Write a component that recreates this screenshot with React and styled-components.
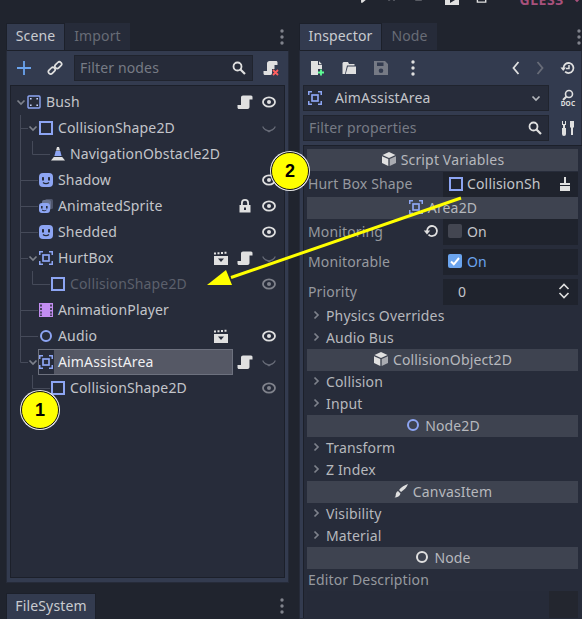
import React from "react";
import styled, { createGlobalStyle } from "styled-components";

const GlobalStyle = createGlobalStyle`
	html, body {
		margin: 0;
		padding: 0;
		background: #20242e;
	}
	* {
		box-sizing: border-box;
	}
`;

const Screen = styled.div`
	position: relative;
	width: 582px;
	height: 619px;
	overflow: hidden;
	background: #20242e;
	font-family: "Noto Sans", sans-serif;
	font-size: 14px;
	letter-spacing: 0.15px;
	color: #c3c5ca;
`;

const TopBar = styled.div`
	height: 23px;
	overflow: hidden;
`;

const Transport = styled.div`
	display: flex;
	align-items: center;
	gap: 16px;
	height: 16px;
	margin-top: -10px;
	padding-left: 359px;
`;

const MovieSlot = styled.span`
	margin-left: 4px;
`;

const RendererName = styled.span`
	margin-left: 16px;
	margin-top: 3px;
	font-weight: 700;
	font-size: 14px;
	line-height: 16px;
	letter-spacing: 0.6px;
	color: #a8517c;
`;

const RendererCaret = styled.span`
	margin-left: -8px;
	margin-top: 2px;
`;

const Docks = styled.div`
	display: flex;
	gap: 10px;
	padding-left: 6px;
`;

const Dock = styled.div`
	display: flex;
	flex-direction: column;
	flex: 0 0 283px;
	min-width: 0;
	height: 596px;
`;

const TabBar = styled.div`
	display: flex;
	align-items: stretch;
	height: 27px;
	flex: none;
`;

const Tab = styled.div`
	display: flex;
	align-items: center;
	justify-content: center;
	width: ${(props) => props.$width}px;
	padding-bottom: 3px;
	background: ${(props) => (props.$active ? "#333b4f" : "#262b39")};
	color: ${(props) => (props.$active ? "#c9cbd0" : "#686c76")};
	border: 1px solid ${(props) => (props.$active ? "#1c202a" : "transparent")};
	border-bottom: none;
`;

const TabMenu = styled.div`
	margin-left: auto;
	width: 16px;
	display: flex;
	align-items: center;
	justify-content: center;
	margin-right: ${(props) => props.$overhang || 0}px;
`;

const Panel = styled.div`
	display: flex;
	flex-direction: column;
	height: ${(props) => props.$height}px;
	background: #333b4f;
	border: 1px solid #262b39;
	border-top-color: #1c202a;
`;

const SceneToolbar = styled.div`
	display: flex;
	align-items: center;
	height: 34px;
	flex: none;
	padding: 0 0 0 5px;
`;

const ToolSlot = styled.div`
	flex: none;
	width: ${(props) => props.$width || 32}px;
	display: flex;
	align-items: center;
	justify-content: center;
`;

const FilterBox = styled.div`
	display: flex;
	align-items: center;
	justify-content: space-between;
	width: ${(props) => props.$width}px;
	height: 26px;
	padding: 0 5px 0 5px;
	background: #262b39;
	border: 1px solid #20242e;
	color: #777b85;
	flex: none;
`;

const FilterText = styled.span`
	margin-bottom: 2px;
`;

const Tree = styled.div`
	position: relative;
	flex: none;
	width: 275px;
	height: 493px;
	margin-left: 3px;
	padding-top: 3px;
	background: #272c3a;
	border: 1px solid #1c202a;
`;

const Guides = styled.svg`
	position: absolute;
	top: 0;
	left: 0;
`;

const NodeRow = styled.div`
	position: relative;
	display: flex;
	align-items: center;
	height: 26px;
	padding-left: ${(props) => 4 + props.$depth * 12}px;
	padding-right: 3px;
`;

const Fold = styled.div`
	flex: none;
	width: 11px;
	display: flex;
	justify-content: center;
`;

const NameCell = styled.div`
	flex: 1;
	min-width: 0;
	display: flex;
	align-items: center;
	height: 26px;
	box-shadow: ${(props) => (props.$selected ? "inset 0 0 0 1px #6d717e" : "none")};
`;

const NodeName = styled.div`
	flex: 1;
	align-self: stretch;
	display: flex;
	align-items: center;
	padding-left: 4px;
	padding-bottom: 2px;
	margin: ${(props) => (props.$selected ? "1px 1px 1px 0" : "0")};
	background: ${(props) => (props.$selected ? "#555865" : "transparent")};
	color: ${(props) => (props.$selected ? "#f0f0f2" : props.$dim ? "#5c606c" : "#c3c5ca")};
`;

const ActionSlot = styled.div`
	flex: none;
	width: 24px;
	display: flex;
	align-items: center;
	justify-content: center;
`;

const BottomTabs = styled.div`
	display: flex;
	height: 26px;
	flex: none;
	margin-top: 10px;
`;

const InspectorToolbar = styled.div`
	display: flex;
	align-items: center;
	height: 34px;
	flex: none;
	padding-left: 1px;
`;

const InspectorField = styled.div`
	display: flex;
	align-items: center;
	height: 26px;
	flex: none;
	padding-left: 3px;
	margin-bottom: ${(props) => props.$gap}px;
`;

const ObjectPicker = styled.div`
	display: flex;
	align-items: center;
	flex: none;
	width: 246px;
	height: 26px;
	padding: 0 7px 0 3px;
	background: #272c3a;
	border: 1px solid #20242e;
`;

const ObjectName = styled.span`
	flex: 1;
	margin-left: 12px;
	margin-bottom: 2px;
	color: #c3c5ca;
`;

const SideButton = styled.div`
	flex: none;
	width: 38px;
	display: flex;
	justify-content: center;
`;

const Properties = styled.div`
	flex: 1;
	flex-shrink: 0;
	margin-left: 3px;
	padding: 3px 0 0 3px;
	background: #272c3a;
	border: 1px solid #1c202a;
	border-right: none;
	border-bottom: none;
	overflow: hidden;
	width: 280px;
`;

const CategoryHeader = styled.div`
	display: flex;
	align-items: center;
	justify-content: center;
	gap: 4px;
	width: 271px;
	height: 22px;
	padding-bottom: 2px;
	background: #3e4350;
	color: #b6b8bd;
`;

const SectionRow = styled.div`
	display: flex;
	align-items: center;
	width: 271px;
	height: 22px;
	padding-left: 4px;
	padding-bottom: 2px;
	gap: 5px;
	color: #b6b8bd;
`;

const PropRow = styled.div`
	display: flex;
	align-items: stretch;
	width: 271px;
	height: ${(props) => props.$height || 26}px;
	margin-top: ${(props) => props.$top || 0}px;
`;

const PropLabel = styled.div`
	flex: 1;
	display: flex;
	align-items: center;
	justify-content: space-between;
	padding: 0 4px 2px 1px;
	color: #96999f;
`;

const PropValue = styled.div`
	flex: 0 0 135px;
	display: flex;
	align-items: center;
	gap: 5px;
	padding: 0 5px 2px;
	background: #1f232d;
	color: ${(props) => (props.$on ? "#6ba4ee" : "#c3c5ca")};
`;

const Grow = styled.span`
	flex: 1;
`;

const ShapeName = styled.span`
	flex: 1;
	margin-left: -2px;
`;

const CheckBox = styled.div`
	flex: none;
	display: flex;
	align-items: center;
	justify-content: center;
	width: 14px;
	height: 14px;
	border-radius: 2px;
	background: ${(props) => (props.$checked ? "#6ba4ee" : "#434651")};
`;

const NumberText = styled.span`
	flex: 1;
	padding-left: 10px;
`;

const SpinnerSlot = styled.span`
	margin-right: 3px;
`;

const DescriptionLabel = styled.div`
	display: flex;
	align-items: center;
	height: 22px;
	padding: 0 0 2px 1px;
	color: #96999f;
`;

const DescriptionBox = styled.div`
	display: flex;
	width: 271px;
	height: 40px;
	background: #23262f;
`;

const DescriptionText = styled.div`
	width: 242px;
	background: #262b39;
`;

const Arrow = styled.svg`
	position: absolute;
	top: 0;
	left: 0;
`;

const Badge = styled.div`
	position: absolute;
	left: ${(props) => props.$x - 19}px;
	top: ${(props) => props.$y - 19}px;
	width: 38px;
	height: 38px;
	display: flex;
	align-items: center;
	justify-content: center;
	border-radius: 50%;
	background: #ffff00;
	border: 1px solid #111;
	box-shadow: 0 0 0 1px #e8e8e8;
	color: #000;
	font-family: "Liberation Sans", sans-serif;
	font-weight: 700;
	font-size: 18px;
`;

const Svg = ({ size = 16, children }) => (
	<svg width={size} height={size} viewBox="0 0 16 16" style={{ display: "block" }}>
		{children}
	</svg>
);

const BLUE = "#8da5f3";
const WHITE = "#e0e0e0";

const BushIcon = () => (
	<Svg>
		<rect x="2" y="2" width="12" height="12" rx="1" fill="none" stroke={BLUE} strokeWidth="1.4" />
		<path d="M4 4h1.6v1.6H4zM10.4 4H12v1.6h-1.6zM4 10.4h1.6V12H4zM10.4 10.4H12V12h-1.6z" fill="#c8d4fa" />
	</Svg>
);

const ShapeIcon = () => (
	<Svg>
		<rect x="2" y="2" width="12" height="12" fill="none" stroke={BLUE} strokeWidth="2" />
	</Svg>
);

const ConeIcon = () => (
	<Svg>
		<path d="M7 1h2l1 3.500H6z" fill={WHITE} />
		<path d="M5.700 5h4.600l1.300 5H4.400z" fill={BLUE} />
		<path d="M3.800 11h8.400l2.800 3.500H1z" fill={WHITE} />
	</Svg>
);

const FaceIcon = () => (
	<Svg>
		<rect x="1" y="1" width="14" height="14" rx="4" fill={BLUE} />
		<rect x="4" y="5" width="2" height="3.500" rx="0.6" fill="#272c3a" />
		<rect x="10" y="5" width="2" height="3.500" rx="0.6" fill="#272c3a" />
		<path d="M5 10.500c1.600 1.600 4.400 1.600 6 0" fill="none" stroke="#272c3a" strokeWidth="1.200" />
	</Svg>
);

const AnimatedIcon = () => (
	<Svg>
		<rect x="7" y="1" width="8" height="10" rx="1.500" fill="#4e556b" />
		<rect x="4" y="2" width="9" height="10" rx="2" fill="#697391" />
		<rect x="1" y="5" width="11" height="10" rx="3" fill={BLUE} />
		<rect x="3" y="8" width="1.600" height="2.500" fill="#272c3a" />
		<rect x="8" y="8" width="1.600" height="2.500" fill="#272c3a" />
		<path d="M4 12c1.200 1 3.200 1 4.400 0" fill="none" stroke="#272c3a" />
	</Svg>
);

const AreaIcon = () => (
	<Svg>
		<path d="M1 5V1h4v1.500H2.500V5zM11 1h4v4h-1.500V2.500H11zM1 11h1.500v2.500H5V15H1zM15 11v4h-4v-1.500h2.500V11z" fill={BLUE} />
		<rect x="5" y="5" width="6" height="6" fill="none" stroke={BLUE} strokeWidth="1.700" />
	</Svg>
);

const FilmIcon = () => (
	<Svg>
		<path
			fillRule="evenodd"
			d="M1 1h14v14H1zM2.200 2.500v2h1.600v-2zM12.200 2.500v2h1.600v-2zM2.200 6v2h1.600V6zM12.200 6v2h1.600V6zM2.200 9.500v2h1.600v-2zM12.200 9.500v2h1.600v-2zM2.200 12.500v1.500h1.600v-1.500zM12.200 12.500v1.500h1.600v-1.500z"
			fill="#c38ef1"
		/>
	</Svg>
);

const RingIcon = ({ color = BLUE, size = 16 }) => (
	<Svg size={size}>
		<circle cx="8" cy="8" r="5" fill="none" stroke={color} strokeWidth="2" />
	</Svg>
);

const ScriptIcon = () => (
	<Svg>
		<path d="M6 1.500h8c1 0 1.500.8 1.500 1.800V5.500h-3V13c0 1-.8 2-2 2H2c-1 0-1.500-.8-1.500-1.800V11H4V3.500c0-1.300.8-2 2-2z" fill={WHITE} />
	</Svg>
);

const ClapperIcon = () => (
	<Svg>
		<path d="M1 2.500h2v2H1zM4.500 2.200h2v2h-2zM8 2h2v2H8zM11.500 1.700h2v2h-2z" fill={WHITE} />
		<path fillRule="evenodd" d="M1 6h14v9H1zM5 8.500l3 3.500 3-3.500z" fill={WHITE} />
	</Svg>
);

const EyeIcon = ({ color = WHITE }) => (
	<Svg>
		<ellipse cx="8" cy="8" rx="6" ry="4.700" fill="none" stroke={color} strokeWidth="1.800" />
		<circle cx="8" cy="8" r="2" fill={color} />
	</Svg>
);

const HiddenEyeIcon = () => (
	<Svg>
		<path d="M2 6c2.500 5.500 9.500 5.500 12 0l.7 1c-1 2-2.500 3.500-4.500 4L8 12.500 5.800 11C3.800 10.500 2.300 9 1.300 7z" fill="#686c78" />
	</Svg>
);

const LockIcon = () => (
	<Svg>
		<path fillRule="evenodd" d="M2.500 7V14.500h11V7h-1.500V5a4 4 0 0 0-8 0v2zM5.800 7V5a2.200 2.200 0 0 1 4.400 0v2zM7 9.500h2v2.500H7z" fill={WHITE} />
	</Svg>
);

const Chevron = ({ open, color = "#7d818b" }) => (
	<svg width="10" height="10" viewBox="0 0 10 10" style={{ display: "block" }}>
		<path d={open ? "M1.500 3.500L5 7l3.500-3.500" : "M3.500 1.500L7 5l-3.500 3.500"} fill="none" stroke={color} strokeWidth="1.700" />
	</svg>
);

const SearchIcon = () => (
	<Svg>
		<circle cx="6.500" cy="6.500" r="4" fill="none" stroke={WHITE} strokeWidth="1.800" />
		<path d="M9.500 9.500L14 14" stroke={WHITE} strokeWidth="2.200" />
	</Svg>
);

const Dots = ({ color = "#80838c" }) => (
	<svg width="6" height="16" viewBox="0 0 6 16" style={{ display: "block" }}>
		<circle cx="3" cy="2" r="1.700" fill={color} />
		<circle cx="3" cy="8" r="1.700" fill={color} />
		<circle cx="3" cy="14" r="1.700" fill={color} />
	</svg>
);

const PlusIcon = () => (
	<Svg>
		<path d="M8 1v14M1 8h14" stroke="#6ba4ee" strokeWidth="1.800" />
	</Svg>
);

const LinkIcon = () => (
	<Svg>
		<g fill="none" stroke={WHITE} strokeWidth="1.700">
			<rect x="1" y="8.500" width="7.500" height="4.500" rx="2.200" transform="rotate(-45 4.700 10.700)" />
			<rect x="7.500" y="3" width="7.500" height="4.500" rx="2.200" transform="rotate(-45 11.200 5.200)" />
		</g>
	</Svg>
);

const DetachIcon = () => (
	<Svg>
		<path d="M6.500 1h6.500c1 0 1.500.6 1.500 1.500V5h-3v4H9v4c0 1-.6 2-1.700 2H2c-1 0-1.500-.6-1.500-1.500V11h3.500V3.500c0-1.500 1-2.500 2.500-2.500z" fill={WHITE} />
		<path d="M10 10l5 5M15 10l-5 5" stroke="#ff5f5f" strokeWidth="1.800" />
	</Svg>
);

const NewFileIcon = () => (
	<Svg>
		<path d="M2 1h7v4h4v4H9v6H2z" fill={WHITE} />
		<path d="M10 1.300l3 3h-3z" fill={WHITE} />
		<path d="M12 9.500v6M9 12.500h6" stroke="#5fff97" strokeWidth="1.800" />
	</Svg>
);

const FolderIcon = () => (
	<Svg>
		<path d="M2.500 2h4.500l1 2h5.500v1.500H6L4 14H1.500V3z" fill={WHITE} />
		<path d="M6.800 6.500H15V14H4.700z" fill={WHITE} />
	</Svg>
);

const SaveIcon = () => (
	<Svg>
		<path fillRule="evenodd" d="M1 1h11l3 3v11H1zM4 2.500v3.500h6.500V2.500zM8 8.500a2.300 2.300 0 1 0 0 4.600 2.300 2.300 0 0 0 0-4.600z" fill="#767a85" />
	</Svg>
);

const PrevIcon = ({ flip, color }) => (
	<svg width="8" height="14" viewBox="0 0 8 14" style={{ display: "block", transform: flip ? "scaleX(-1)" : "none" }}>
		<path d="M6.500 1L1.500 7l5 6" fill="none" stroke={color} strokeWidth="1.800" />
	</svg>
);

const HistoryIcon = () => (
	<Svg>
		<path d="M3.500 8a5 5 0 1 1 1.600 3.700" fill="none" stroke={WHITE} strokeWidth="1.800" />
		<path d="M0.500 7.500h5.500L3.200 11z" fill={WHITE} />
		<path d="M9 5v3.500h-3" fill="none" stroke={WHITE} strokeWidth="1.500" />
	</Svg>
);

const DocIcon = () => (
	<svg width="20" height="18" viewBox="0 0 20 18" style={{ display: "block" }}>
		<circle cx="11" cy="5" r="3.500" fill="none" stroke={WHITE} strokeWidth="1.600" />
		<path d="M8.500 7.500L5 11" stroke={WHITE} strokeWidth="2" />
		<text x="10" y="17" textAnchor="middle" fontFamily="Noto Sans, sans-serif" fontWeight="700" fontSize="6.500" letterSpacing="0.200" fill={WHITE}>
			DOC
		</text>
	</svg>
);

const ToolsIcon = () => (
	<Svg>
		<path d="M2 1v4h1v3H2v6a2 2 0 0 0 4 0V8H5V5h1V1H5v3H3V1z" fill={WHITE} />
		<path d="M10 1h4v6l-1 1v7h-2V8l-1-1z" fill={WHITE} />
	</Svg>
);

const BroomIcon = () => (
	<Svg>
		<path d="M7 1h2v6h4v2H3V7h4zM3 10h10v5H3z" fill={WHITE} />
	</Svg>
);

const CubeIcon = () => (
	<Svg>
		<path d="M8 1l6.500 3L8 7 1.500 4z" fill={WHITE} />
		<path d="M1 5.200l6.300 2.900V15L1 12z" fill={WHITE} />
		<path d="M15 5.200L8.700 8.100V15l6.300-3z" fill="#a9abb1" />
	</Svg>
);

const BrushIcon = () => (
	<Svg>
		<path d="M15 1c-1 3-4 6-7 8L6 7c2-3 6-5 9-6z" fill={WHITE} />
		<path d="M5 8l2.500 2.500c-.5 2.500-3 4-6 4 1.500-1 1-2.500 1.500-4 .4-1.200 1-2 2-2.500z" fill={WHITE} />
	</Svg>
);

const ResetIcon = () => (
	<Svg>
		<path d="M4 8a5 5 0 1 1 1.500 3.600" fill="none" stroke={WHITE} strokeWidth="1.800" />
		<path d="M0.800 7.500h6.400L4 11.500z" fill={WHITE} />
	</Svg>
);

const CheckMark = () => (
	<svg width="12" height="12" viewBox="0 0 12 12" style={{ display: "block" }}>
		<path d="M2 6.500l2.800 2.800L10 3" fill="none" stroke="#fff" strokeWidth="2" />
	</svg>
);

const SpinnerIcon = () => (
	<svg width="12" height="16" viewBox="0 0 12 16" style={{ display: "block" }}>
		<path d="M1.500 6L6 1.500 10.500 6M1.500 10L6 14.500l4.500-4.500" fill="none" stroke={WHITE} strokeWidth="1.600" />
	</svg>
);

const PlayIcon = () => (
	<Svg>
		<path d="M3 0h2l8 8-8 7H3z" fill={WHITE} />
	</Svg>
);

const MovieIcon = () => (
	<Svg>
		<path fillRule="evenodd" d="M1 1h14v14H1zM6 7v6l5-3z" fill={WHITE} />
	</Svg>
);

const FolderDarkIcon = () => (
	<Svg>
		<path fillRule="evenodd" d="M1 1h14v14H1zM3 8h3l1 1h6v4H3z" fill={WHITE} />
	</Svg>
);

const nodes = [
	{ name: "Bush", depth: 0, icon: <BushIcon />, fold: true, actions: [<ScriptIcon />, <EyeIcon />] },
	{ name: "CollisionShape2D", depth: 1, icon: <ShapeIcon />, fold: true, actions: [<HiddenEyeIcon />] },
	{ name: "NavigationObstacle2D", depth: 2, icon: <ConeIcon />, actions: [] },
	{ name: "Shadow", depth: 1, icon: <FaceIcon />, actions: [<EyeIcon />] },
	{ name: "AnimatedSprite", depth: 1, icon: <AnimatedIcon />, actions: [<LockIcon />, <EyeIcon />] },
	{ name: "Shedded", depth: 1, icon: <FaceIcon />, actions: [<EyeIcon />] },
	{ name: "HurtBox", depth: 1, icon: <AreaIcon />, fold: true, actions: [<ClapperIcon />, <ScriptIcon />, <HiddenEyeIcon />] },
	{ name: "CollisionShape2D", depth: 2, icon: <ShapeIcon />, dim: true, actions: [<EyeIcon color="#80838c" />] },
	{ name: "AnimationPlayer", depth: 1, icon: <FilmIcon />, actions: [] },
	{ name: "Audio", depth: 1, icon: <RingIcon />, actions: [<ClapperIcon />, null, <EyeIcon />] },
	{ name: "AimAssistArea", depth: 1, icon: <AreaIcon />, fold: true, selected: true, actions: [<ScriptIcon />, <HiddenEyeIcon />] },
	{ name: "CollisionShape2D", depth: 2, icon: <ShapeIcon />, actions: [<EyeIcon color="#80838c" />] },
];

const App = () => {
	return (
		<Screen>
			<GlobalStyle />
			<TopBar>
				<Transport>
					<PlayIcon />
					<Svg>
						<path d="M3 0h3v12H3zM10 0h3v12h-3z" fill="#5f626b" />
					</Svg>
					<Svg>
						<rect x="3" y="0" width="10" height="12" rx="1" fill="#6b6d75" />
					</Svg>
					<MovieSlot>
						<MovieIcon />
					</MovieSlot>
					<FolderDarkIcon />
					<RendererName>GLES3</RendererName>
					<RendererCaret>
						<Chevron open color="#a8517c" />
					</RendererCaret>
				</Transport>
			</TopBar>
			<Docks>
				<Dock>
					<TabBar>
						<Tab $active $width={59}>Scene</Tab>
						<Tab $width={65}>Import</Tab>
						<TabMenu $overhang={-1}>
							<Dots />
						</TabMenu>
					</TabBar>
					<Panel $height={533}>
						<SceneToolbar>
							<ToolSlot $width={24}>
								<PlusIcon />
							</ToolSlot>
							<ToolSlot $width={38}>
								<LinkIcon />
							</ToolSlot>
							<FilterBox $width={179}>
								<FilterText>Filter nodes</FilterText>
								<SearchIcon />
							</FilterBox>
							<ToolSlot $width={35}>
								<DetachIcon />
							</ToolSlot>
						</SceneToolbar>
						<Tree>
							<Guides width="273" height="491" viewBox="11 86 273 491">
								<path
									d="M20.500 115V362.500M20.500 128.500H28M20.500 180.500H38M20.500 206.500H38M20.500 232.500H38M20.500 258.500H28M20.500 310.500H38M20.500 336.500H38M20.500 362.500H28M32.500 141V154.500H50M32.500 271V284.500H50M32.500 375V388.500H50"
									fill="none"
									stroke="#454a59"
								/>
							</Guides>
							{nodes.map((node, i) => (
								<NodeRow key={i} $depth={node.depth}>
									<Fold>{node.fold && <Chevron open />}</Fold>
									<NameCell $selected={node.selected}>
										{node.icon}
										<NodeName $selected={node.selected} $dim={node.dim}>
											{node.name}
										</NodeName>
									</NameCell>
									{node.actions.map((action, j) => (
										<ActionSlot key={j}>{action}</ActionSlot>
									))}
								</NodeRow>
							))}
						</Tree>
					</Panel>
					<BottomTabs>
						<Tab $active $width={90}>FileSystem</Tab>
						<TabMenu $overhang={-1}>
							<Dots />
						</TabMenu>
					</BottomTabs>
				</Dock>
				<Dock>
					<TabBar>
						<Tab $active $width={83}>Inspector</Tab>
						<Tab $width={55}>Node</Tab>
						<TabMenu $overhang={-5}>
							<Dots />
						</TabMenu>
					</TabBar>
					<Panel $height={569}>
						<InspectorToolbar>
							<ToolSlot><NewFileIcon /></ToolSlot>
							<ToolSlot><FolderIcon /></ToolSlot>
							<ToolSlot><SaveIcon /></ToolSlot>
							<ToolSlot><Dots color={WHITE} /></ToolSlot>
							<Grow />
							<ToolSlot $width={24}><PrevIcon color={WHITE} /></ToolSlot>
							<ToolSlot $width={24}><PrevIcon flip color="#686c78" /></ToolSlot>
							<ToolSlot $width={3} />
							<ToolSlot $width={26}><HistoryIcon /></ToolSlot>
						</InspectorToolbar>
						<InspectorField $gap={4}>
							<ObjectPicker>
								<AreaIcon />
								<ObjectName>AimAssistArea</ObjectName>
								<Chevron open color="#b4b7bc" />
							</ObjectPicker>
							<SideButton><DocIcon /></SideButton>
						</InspectorField>
						<InspectorField $gap={4}>
							<FilterBox $width={246}>
								<FilterText>Filter properties</FilterText>
								<SearchIcon />
							</FilterBox>
							<SideButton><ToolsIcon /></SideButton>
						</InspectorField>
						<Properties>
							<CategoryHeader><CubeIcon />Script Variables</CategoryHeader>
							<PropRow $height={25} $top={1}>
								<PropLabel>Hurt Box Shape</PropLabel>
								<PropValue>
									<ShapeIcon />
									<ShapeName>CollisionSh</ShapeName>
									<BroomIcon />
								</PropValue>
							</PropRow>
							<CategoryHeader><AreaIcon />Area2D</CategoryHeader>
							<PropRow>
								<PropLabel>
									Monitoring
									<ResetIcon />
								</PropLabel>
								<PropValue>
									<CheckBox />
									On
								</PropValue>
							</PropRow>
							<PropRow $top={4}>
								<PropLabel>Monitorable</PropLabel>
								<PropValue $on>
									<CheckBox $checked><CheckMark /></CheckBox>
									On
								</PropValue>
							</PropRow>
							<PropRow $top={4}>
								<PropLabel>Priority</PropLabel>
								<PropValue>
									<NumberText>0</NumberText>
									<SpinnerSlot><SpinnerIcon /></SpinnerSlot>
								</PropValue>
							</PropRow>
							<SectionRow><Chevron />Physics Overrides</SectionRow>
							<SectionRow><Chevron />Audio Bus</SectionRow>
							<CategoryHeader><CubeIcon />CollisionObject2D</CategoryHeader>
							<SectionRow><Chevron />Collision</SectionRow>
							<SectionRow><Chevron />Input</SectionRow>
							<CategoryHeader><RingIcon />Node2D</CategoryHeader>
							<SectionRow><Chevron />Transform</SectionRow>
							<SectionRow><Chevron />Z Index</SectionRow>
							<CategoryHeader><BrushIcon />CanvasItem</CategoryHeader>
							<SectionRow><Chevron />Visibility</SectionRow>
							<SectionRow><Chevron />Material</SectionRow>
							<CategoryHeader><RingIcon color={WHITE} />Node</CategoryHeader>
							<DescriptionLabel>Editor Description</DescriptionLabel>
							<DescriptionBox>
								<DescriptionText />
							</DescriptionBox>
						</Properties>
					</Panel>
				</Dock>
			</Docks>
			<Arrow width="582" height="619" viewBox="0 0 582 619">
				<path d="M461 198L231 277.500" stroke="#ffff00" strokeWidth="3" fill="none" />
				<path d="M207 285L226 270L232 285z" fill="#ffff00" />
			</Arrow>
			<Badge $x={40} $y={410}>1</Badge>
			<Badge $x={290} $y={171}>2</Badge>
		</Screen>
	);
};

export default App;
